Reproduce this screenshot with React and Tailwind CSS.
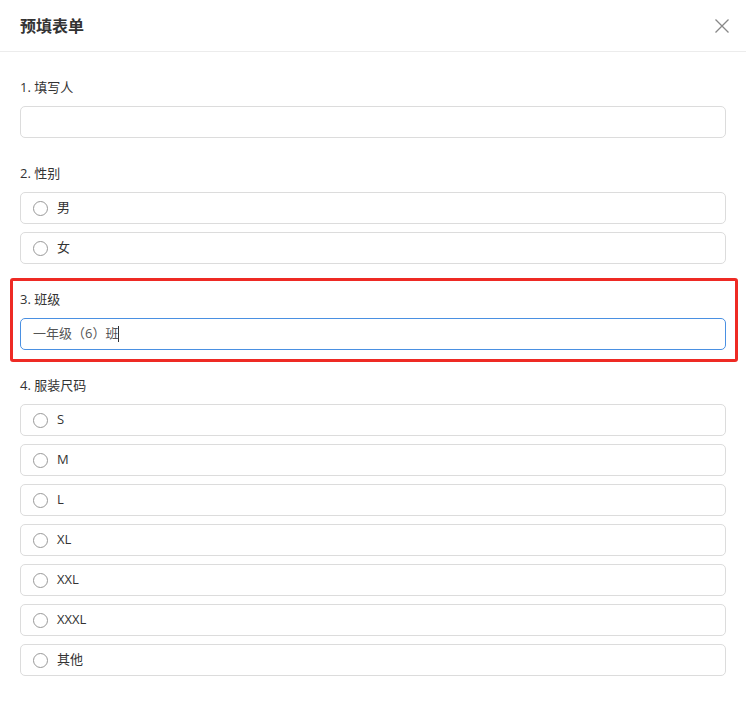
import React from 'react';

const sizes = ['S', 'M', 'L', 'XL', 'XXL', 'XXXL', '其他'];

function Radio({ label }) {
  return (
    <label className="flex items-center h-8 px-3 border border-[#dcdcdc] rounded-[5px] bg-white">
      <span className="w-[15px] h-[15px] rounded-full border border-[#999] shrink-0" />
      <span className="ml-[9px] text-[13px] text-[#333]">{label}</span>
    </label>
  );
}

function Section({ title, children, highlight }) {
  return (
    <div className="relative">
      {highlight && (
        <div className="absolute -top-[11px] -left-[10px] -right-[12px] -bottom-[12px] border-[3px] border-[#ee2a24] rounded-[3px] pointer-events-none" />
      )}
      <div className="h-5 leading-5 text-[13px] text-[#333] mb-[9px]">{title}</div>
      <div className="flex flex-col gap-2">{children}</div>
    </div>
  );
}

export default function App() {
  return (
    <div
      className="w-[746px] h-[713px] bg-white"
      style={{ fontFamily: '"Segoe UI", "Open Sans", "Noto Sans CJK SC", sans-serif' }}
    >
      <div className="h-[52px] border-b border-[#ececec] flex items-center justify-between px-5">
        <h1 className="text-[16px] font-bold text-[#333]">预填表单</h1>
        <svg width="16" height="16" viewBox="0 0 16 16" className="mr-[-4px]">
          <path d="M1.5 1.5L14.5 14.5M14.5 1.5L1.5 14.5" stroke="#888" strokeWidth="1.3" fill="none" />
        </svg>
      </div>
      <div className="px-5 pt-[25px] flex flex-col gap-[25px]">
        <Section title="1. 填写人">
          <div className="h-8 border border-[#dcdcdc] rounded-[5px]" />
        </Section>
        <Section title="2. 性别">
          <Radio label="男" />
          <Radio label="女" />
        </Section>
        <Section title="3. 班级" highlight>
          <div className="h-8 border border-[#4a90e2] rounded-[5px] flex items-center px-3 text-[13px] text-[#555]">
            一年级（6）班<span className="w-px h-4 bg-[#333]" />
          </div>
        </Section>
        <Section title="4. 服装尺码">
          {sizes.map((s) => (
            <Radio key={s} label={s} />
          ))}
        </Section>
      </div>
    </div>
  );
}
